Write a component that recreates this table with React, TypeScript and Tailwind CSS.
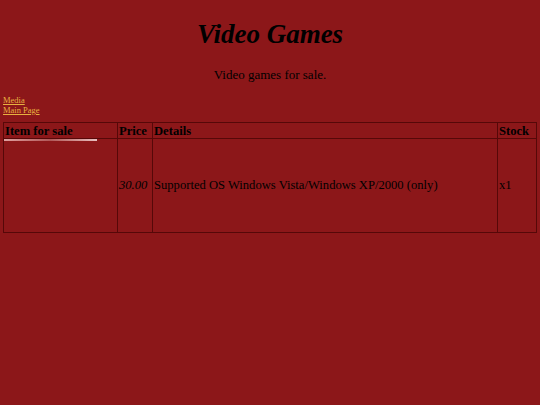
import React from "react";

export default function App() {
  return (
    <div className="min-h-[405px] w-full bg-[#8c1719] text-black font-['Liberation_Serif',serif]">
      <div className="pt-[18px] text-center">
        <h1 className="text-[27px] leading-[32px] font-bold italic">Video Games</h1>
        <p className="mt-[17px] text-[13px] leading-[16px]">Video games for sale.</p>
      </div>
      <div className="mt-[12px] px-[3px] flex flex-col text-[8.5px] leading-[10px]">
        <a href="#" className="underline text-[#e8b040] w-fit">Media</a>
        <a href="#" className="underline text-[#e8b040] w-fit">Main Page</a>
      </div>
      <table className="mx-[3px] mt-[7px] w-[534px] border-collapse border border-[#560808] text-[12.6px]">
        <thead>
          <tr className="h-[16px]">
            <th className="w-[114px] border border-[#560808] px-[1px] text-left align-middle leading-[14px]">Item for sale</th>
            <th className="w-[35px] border border-[#560808] px-[1px] text-left leading-[14px]">Price</th>
            <th className="border border-[#560808] px-[1px] text-left leading-[14px]">Details</th>
            <th className="w-[39px] border border-[#560808] px-[1px] text-left leading-[14px]">Stock</th>
          </tr>
        </thead>
        <tbody>
          <tr className="h-[94px]">
            <td className="border border-[#560808] p-0 align-top">
              <div className="h-[2px] w-[93px] bg-gradient-to-r from-[#e0a0a0] via-[#b05858] to-[#e8c0c0]" />
            </td>
            <td className="border border-[#560808] px-[1px] italic">30.00</td>
            <td className="border border-[#560808] px-[1px]">Supported OS Windows Vista/Windows XP/2000 (only)</td>
            <td className="border border-[#560808] px-[1px]">x1</td>
          </tr>
        </tbody>
      </table>
    </div>
  );
}
